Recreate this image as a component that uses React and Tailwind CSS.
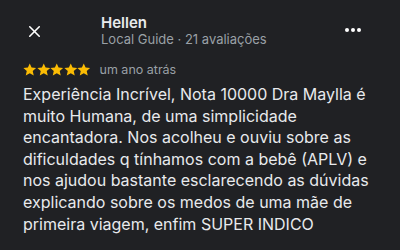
import { X } from "lucide-react";

const Star = () => (
  <svg viewBox="0 0 24 24" className="w-[13.5px] h-[13.5px]" fill="#fbbc04">
    <path d="M12 0.8l3.3 7.4 8 .8-6 5.4 1.8 7.9L12 18.2l-7.1 4.1 1.8-7.9-6-5.4 8-.8z" />
  </svg>
);

const App = () => {
  const review =
    "Experiência Incrível, Nota 10000 Dra Maylla é muito Humana, de uma simplicidade encantadora. Nos acolheu e ouviu sobre as dificuldades q tínhamos com a bebê (APLV) e nos ajudou bastante esclarecendo as dúvidas explicando sobre os medos de uma mãe de primeira viagem, enfim SUPER INDICO";

  return (
    <div className="w-[400px] h-[250px] overflow-hidden bg-[#202124] text-[#e8eaed] font-['Inter',sans-serif]">
      <div className="flex items-start pt-[14px]">
        <div className="w-[101px] pl-[25px] pt-[8px]">
          <X size={19} strokeWidth={2} className="text-white" />
        </div>
        <div className="flex-1">
          <p className="text-[15px] leading-[17px] font-semibold text-[#e8eaed]">Hellen</p>
          <p className="text-[13px] leading-[16px] text-[#9aa0a6]">
            Local Guide · 21 avaliações
          </p>
        </div>
        <div className="flex gap-[2px] pr-[39px] pt-[14px]">
          <span className="w-[4px] h-[4px] rounded-full bg-white" />
          <span className="w-[4px] h-[4px] rounded-full bg-white" />
          <span className="w-[4px] h-[4px] rounded-full bg-white" />
        </div>
      </div>

      <div className="flex items-center pl-[23px] mt-[16px] h-[14px]">
        <div className="flex">
          <Star />
          <Star />
          <Star />
          <Star />
          <Star />
        </div>
        <span className="ml-[9px] text-[12.5px] text-[#9aa0a6]">um ano atrás</span>
      </div>

      <p className="pl-[23px] pr-[20px] mt-[7px] text-[16px] leading-[21.6px] text-[#e8eaed]">
        {review}
      </p>
    </div>
  );
};

export default App;
